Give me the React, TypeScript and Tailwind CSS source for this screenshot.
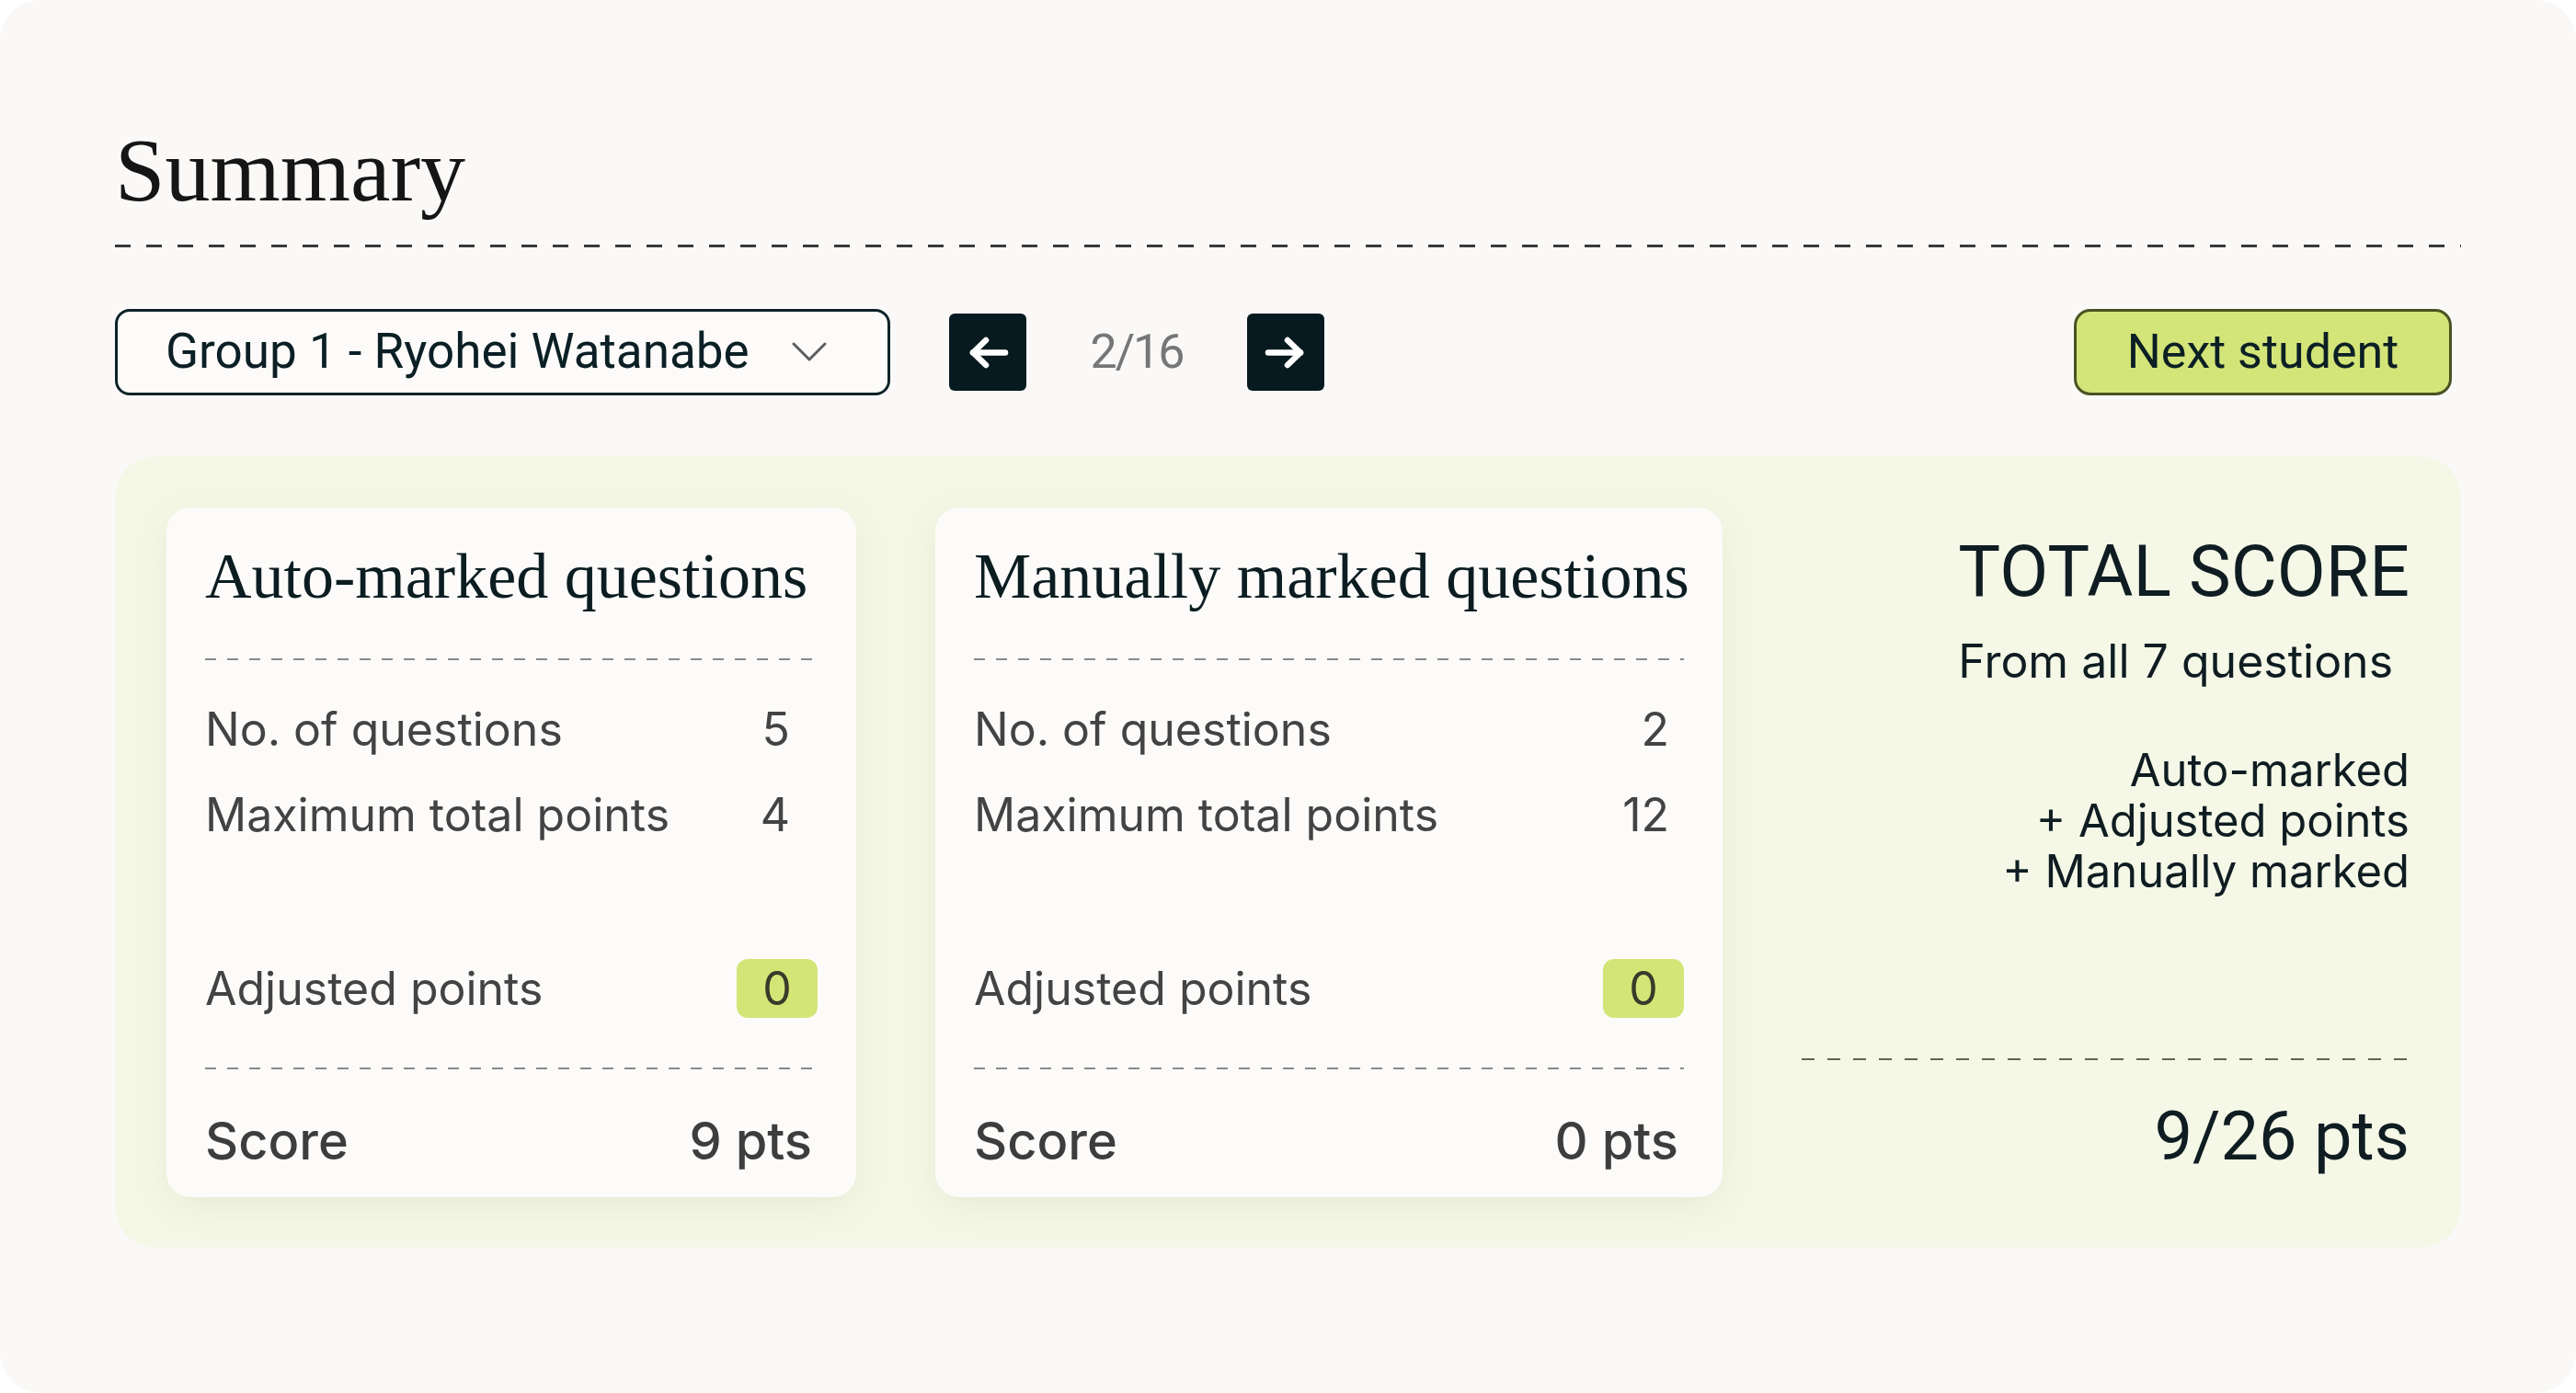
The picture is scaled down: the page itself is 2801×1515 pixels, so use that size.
import React from "react";

const serif = "font-['Liberation_Serif',serif]";
const inter = "font-['Inter',sans-serif]";
const roboto = "font-['Roboto',sans-serif]";

function ArrowBtn({ dir }: { dir: "left" | "right" }) {
  return (
    <button className="w-[84px] h-[84px] rounded-[6px] bg-[#061a20] flex items-center justify-center">
      <svg width="84" height="84" viewBox="0 0 84 84" fill="none" stroke="#ffffff" strokeWidth="6.5" strokeLinecap="round" strokeLinejoin="round">
        {dir === "left" ? (
          <>
            <path d="M61 42.5H26" />
            <path d="M40 29L26 42.5L40 56" />
          </>
        ) : (
          <>
            <path d="M23 42.5H58" />
            <path d="M44 29L58 42.5L44 56" />
          </>
        )}
      </svg>
    </button>
  );
}

type CardProps = {
  title: string;
  count: string;
  max: string;
  score: string;
  width: string;
  valuePad: string;
};

function MarkCard({ title, count, max, score, width, valuePad }: CardProps) {
  return (
    <div className={`${width} h-[750px] shrink-0 rounded-[26px] bg-[#fcfbf9] shadow-[0_10px_40px_rgba(110,125,50,0.10)] px-[42px] pt-[40px] flex flex-col`}>
      <h2 className={`${serif} text-[70px] leading-none text-[#0c1d22] whitespace-nowrap`}>{title}</h2>
      <div className="mt-[54px] h-[2px] bg-[linear-gradient(to_right,#8a8a8a_50%,transparent_50%)] bg-[length:24px_2px] bg-repeat-x" />
      <div className={`${inter} text-[50px] text-[#434343]`}>
        <div className="mt-[43px] h-[64px] flex items-center justify-between">
          <span>No. of questions</span>
          <span className={valuePad}>{count}</span>
        </div>
        <div className="mt-[29px] h-[64px] flex items-center justify-between">
          <span>Maximum total points</span>
          <span className={valuePad}>{max}</span>
        </div>
        <div className="mt-[125px] h-[64px] flex items-center justify-between">
          <span>Adjusted points</span>
          <span className="w-[88px] h-[64px] rounded-[12px] bg-[#d4e577] flex items-center justify-center text-[#3a3a2a]">0</span>
        </div>
      </div>
      <div className="mt-[54px] h-[2px] bg-[linear-gradient(to_right,#8a8a8a_50%,transparent_50%)] bg-[length:24px_2px] bg-repeat-x" />
      <div className={`${inter} mt-[46px] h-[64px] flex items-center justify-between text-[56px] font-medium text-[#3d3d3d] pr-[6px]`}>
        <span>Score</span>
        <span>{score}</span>
      </div>
    </div>
  );
}

export default function App() {
  return (
    <div className="w-[2801px] h-[1515px] bg-white">
      <div className="h-full rounded-[44px] bg-[#faf9f7] px-[125px] pt-[136px]">
        <h1 className={`${serif} text-[98px] leading-none text-[#151515]`}>Summary</h1>
        <div className="mt-[32px] h-[3px] bg-[linear-gradient(to_right,#3a3a3a_50%,transparent_50%)] bg-[length:34px_3px] bg-repeat-x" />

        <div className="mt-[67px] h-[94px] flex items-center">
          <button className={`${roboto} w-[843px] h-[94px] rounded-[16px] border-[3px] border-[#0e2329] bg-[#fcfbf9] pl-[52px] pr-[66px] flex items-center justify-between text-[53px] text-[#0b1f25]`}>
            <span>Group 1 - Ryohei Watanabe</span>
            <svg width="38" height="22" viewBox="0 0 38 22" fill="none" stroke="#5c5c5c" strokeWidth="3" strokeLinecap="round" strokeLinejoin="round">
              <path d="M2 2L19 19L36 2" />
            </svg>
          </button>
          <div className="ml-[64px] flex items-center">
            <ArrowBtn dir="left" />
            <span className={`${roboto} w-[240px] text-center text-[52px] text-[#767676] tracking-[-2px]`}>2/16</span>
            <ArrowBtn dir="right" />
          </div>
          <button className={`${roboto} ml-auto mr-[10px] w-[411px] h-[94px] rounded-[18px] border-[3px] border-[#4a5222] bg-[#d3e478] text-[52px] text-[#0b1f25]`}>
            Next student
          </button>
        </div>

        <div className="mt-[66px] h-[861px] rounded-[45px] bg-[#f5f8e7] p-[56px] flex gap-[86px]">
          <MarkCard width="w-[750px]" valuePad="pr-[30px]" title="Auto-marked questions" count="5" max="4" score="9 pts" />
          <MarkCard width="w-[856px]" valuePad="pr-[16px]" title="Manually marked questions" count="2" max="12" score="0 pts" />

          <div className="flex-1 flex flex-col text-[#0f1d22]">
            <div className="self-end mt-[32px]">
              <div className={`${roboto} text-[77px] leading-none`}>TOTAL SCORE</div>
              <div className={`${inter} mt-[30px] text-[50px] leading-[56px]`}>From all 7 questions</div>
            </div>
            <div className={`${inter} mt-[63px] text-right text-[49px] leading-[55px]`}>
              <div>Auto-marked</div>
              <div>+ Adjusted points</div>
              <div>+ Manually marked</div>
            </div>
            <div className="mt-auto h-[2px] bg-[linear-gradient(to_right,#5f6452_50%,transparent_50%)] bg-[length:28px_2px] bg-repeat-x" />
            <div className={`${roboto} mt-[45px] mb-[29px] h-[74px] flex items-center justify-end text-[74px]`}>9/26 pts</div>
          </div>
        </div>
      </div>
    </div>
  );
}
